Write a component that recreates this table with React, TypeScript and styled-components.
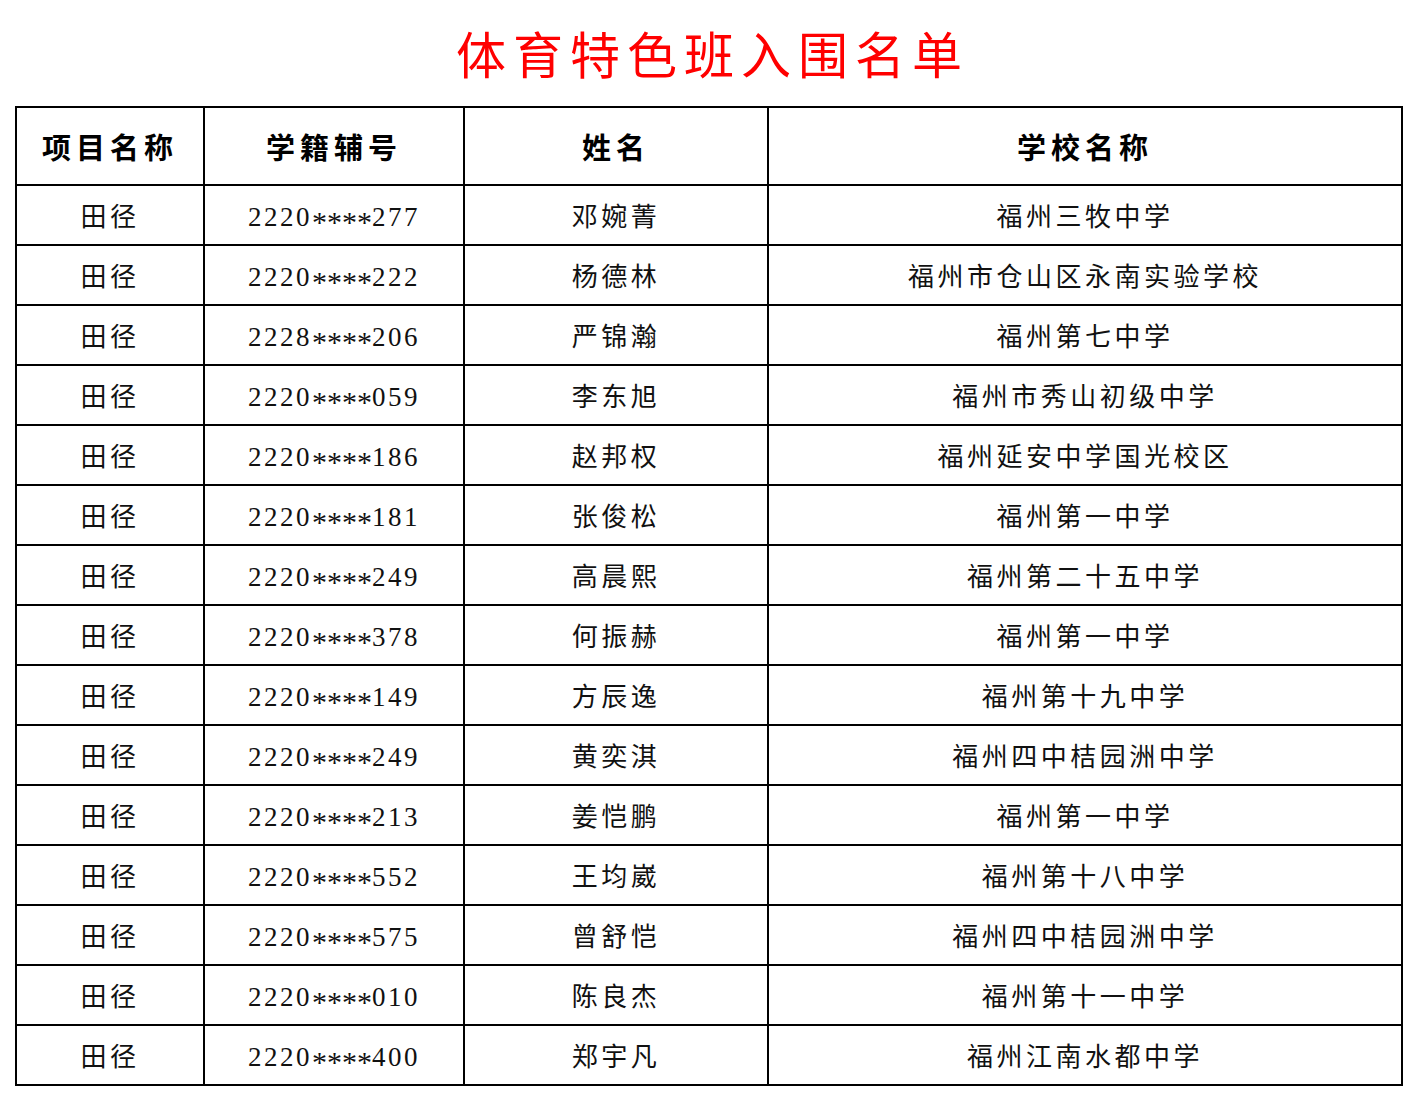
import styled, { createGlobalStyle } from "styled-components";

const rows: [string, string, string, string][] = [
    ["田径", "2220****277", "邓婉菁", "福州三牧中学"],
    ["田径", "2220****222", "杨德林", "福州市仓山区永南实验学校"],
    ["田径", "2228****206", "严锦瀚", "福州第七中学"],
    ["田径", "2220****059", "李东旭", "福州市秀山初级中学"],
    ["田径", "2220****186", "赵邦权", "福州延安中学国光校区"],
    ["田径", "2220****181", "张俊松", "福州第一中学"],
    ["田径", "2220****249", "高晨熙", "福州第二十五中学"],
    ["田径", "2220****378", "何振赫", "福州第一中学"],
    ["田径", "2220****149", "方辰逸", "福州第十九中学"],
    ["田径", "2220****249", "黄奕淇", "福州四中桔园洲中学"],
    ["田径", "2220****213", "姜恺鹏", "福州第一中学"],
    ["田径", "2220****552", "王均崴", "福州第十八中学"],
    ["田径", "2220****575", "曾舒恺", "福州四中桔园洲中学"],
    ["田径", "2220****010", "陈良杰", "福州第十一中学"],
    ["田径", "2220****400", "郑宇凡", "福州江南水都中学"],
];

// split "2220****277" so the masked stars can be drawn larger and centred
const StudentNo = ({ value }: { value: string }) => (
    <NumText>
        {value.slice(0, 4)}
        <Stars>****</Stars>
        {value.slice(8)}
    </NumText>
);

export default function App() {
    return (
        <>
            <GlobalStyle />
            <Page>
                <Title>体育特色班入围名单</Title>
                <Table>
                    <colgroup>
                        <col style={{ width: 188 }} />
                        <col style={{ width: 260 }} />
                        <col style={{ width: 304 }} />
                        <col />
                    </colgroup>
                    <thead>
                        <tr>
                            <HeadCell>项目名称</HeadCell>
                            <HeadCell>学籍辅号</HeadCell>
                            <HeadCell>姓名</HeadCell>
                            <HeadCell>学校名称</HeadCell>
                        </tr>
                    </thead>
                    <tbody>
                        {rows.map((r, i) => (
                            <tr key={i}>
                                <Cell>{r[0]}</Cell>
                                <NumCell><StudentNo value={r[1]} /></NumCell>
                                <Cell>{r[2]}</Cell>
                                <Cell>{r[3]}</Cell>
                            </tr>
                        ))}
                    </tbody>
                </Table>
            </Page>
        </>
    );
}

const GlobalStyle = createGlobalStyle`
    body {
        margin: 0;
        background: #fff;
        font-family: "Liberation Serif", "Noto Sans CJK SC", serif;
    }
`;

const Page = styled.div`
    width: 1418px;
    padding: 18px 15px 0 15px;
    box-sizing: border-box;
`;

const Title = styled.h1`
    margin: 0 0 20px 0;
    height: 68px;
    line-height: 68px;
    text-align: center;
    color: #ff0000;
    font-size: 50px;
    font-weight: 400;
    letter-spacing: 7px;
    padding-left: 7px;
    font-family: "Noto Sans CJK SC", serif;
`;

const Table = styled.table`
    width: 1388px;
    border-collapse: collapse;
    table-layout: fixed;
    border: 2px solid #000;
`;

const HeadCell = styled.th`
    height: 76px;
    border: 2px solid #000;
    padding: 0;
    text-align: center;
    font-size: 29px;
    font-weight: 700;
    letter-spacing: 5px;
    color: #000;
    font-family: "Noto Sans CJK SC", serif;
`;

const Cell = styled.td`
    height: 58px;
    border: 2px solid #000;
    padding: 0;
    text-align: center;
    font-size: 26px;
    line-height: 30px;
    letter-spacing: 3.5px;
    color: #111;
    font-family: "Noto Sans CJK SC", serif;
    font-weight: 400;
`;

const NumCell = styled(Cell)`
    font-family: "Liberation Serif", serif;
    font-size: 27px;
    letter-spacing: 2.5px;
`;

const NumText = styled.span`
    display: inline-block;
    line-height: 30px;
    height: 30px;
    padding-top: 4px;
    box-sizing: border-box;
    overflow: visible;
`;

const Stars = styled.span`
    font-size: 30px;
    line-height: 0;
    letter-spacing: 0;
    vertical-align: -0.2em;
`;
